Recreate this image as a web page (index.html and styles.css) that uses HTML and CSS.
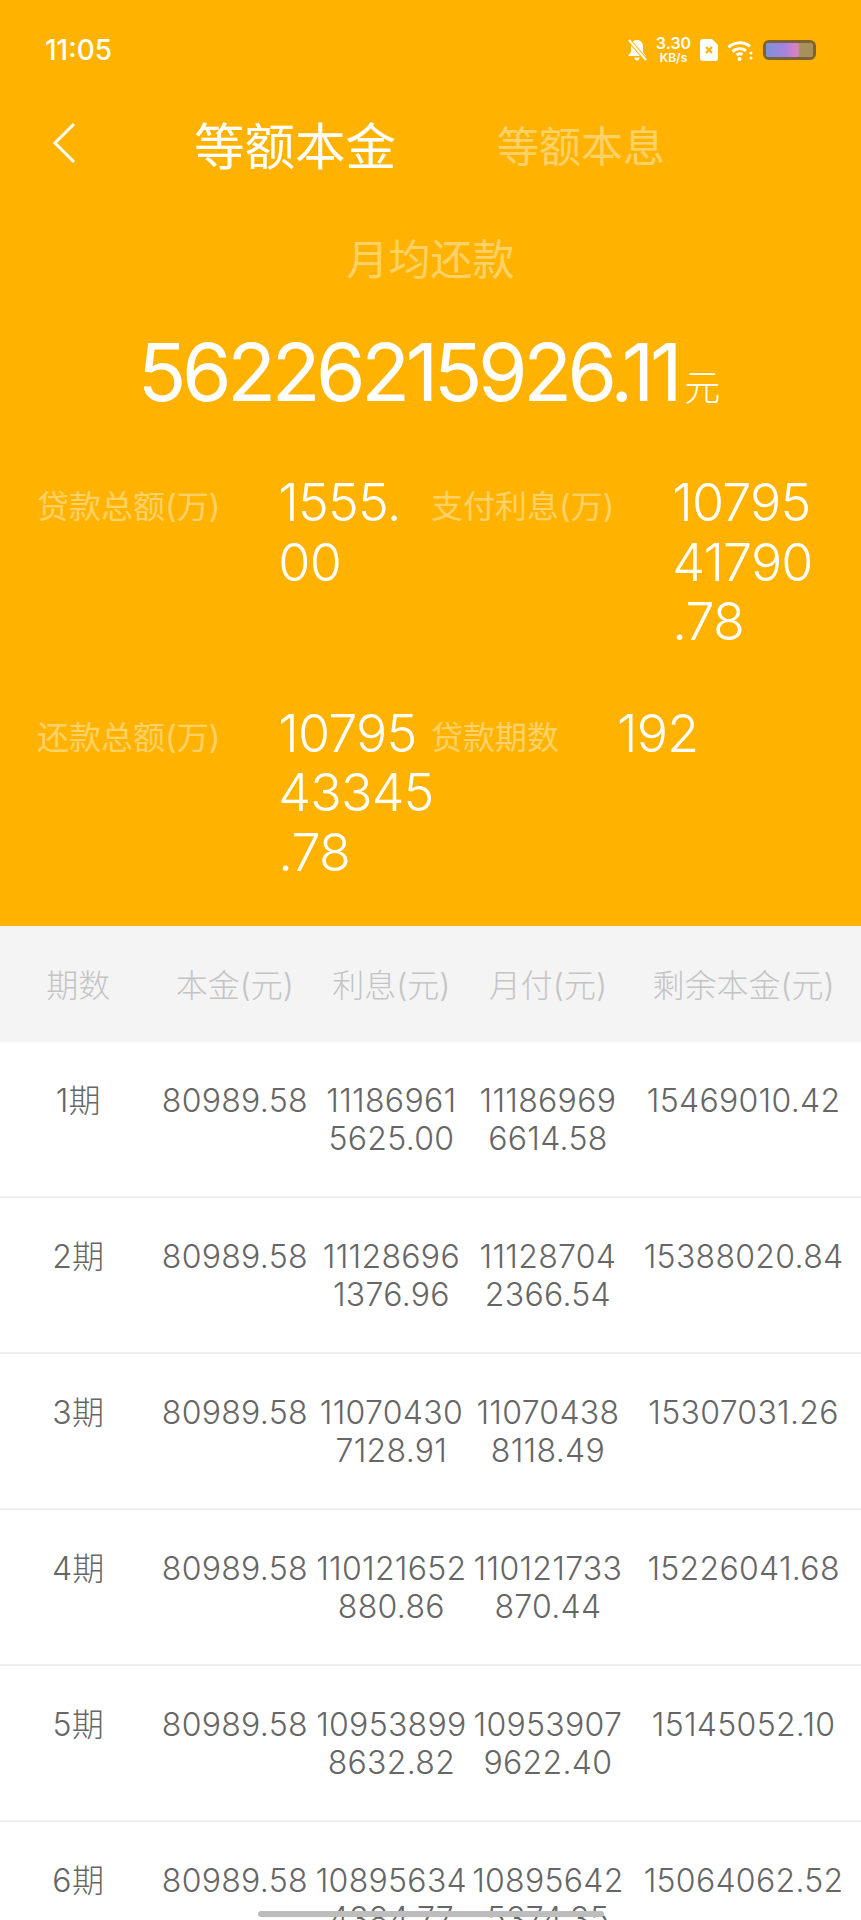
FILE: index.html
```html
<!DOCTYPE html>
<html lang="zh">
<head>
<meta charset="utf-8">
<title>等额本金</title>
<link rel="stylesheet" href="styles.css">
</head>
<body>
<div class="page">
  <section class="hero">
    <div class="status">
      <span class="time">11:05</span>
      <div class="status-icons">
        <svg class="ic-bell" viewBox="0 0 20 22"><path d="M10 1c4 0 6 3 6 7v5l3 4H1l3-4V8c0-4 2-7 6-7zM7.500 18.500h5c0 2-1 3-2.500 3s-2.500-1-2.500-3z" fill="#fff"/><path d="M1 0l18 21" stroke="#ffb300" stroke-width="4"/><path d="M2 1l17 20" stroke="#fff" stroke-width="2"/></svg>
        <div class="speed"><span class="speed-num">3.30</span><span class="speed-unit">KB/s</span></div>
        <svg class="ic-sim" viewBox="0 0 18 22"><path d="M3 0h9l6 6v13a3 3 0 0 1-3 3H3a3 3 0 0 1-3-3V3a3 3 0 0 1 3-3z" fill="#fff"/><path d="M6 8l6 6M12 8l-6 6" stroke="#ffb300" stroke-width="2.200"/></svg>
        <svg class="ic-wifi" viewBox="0 0 25 21" fill="none" stroke="#fff" stroke-width="3"><path d="M0.500 7.500C6 1.500 16 1.500 22 6.500"/><path d="M4.500 11.500c4-3.500 9.500-3.500 13.500-.8"/><path d="M8.500 15c2-1.500 4-1.500 6-.5"/><circle cx="11.500" cy="19" r="2" fill="#fff" stroke="none"/><circle cx="23" cy="13" r="1.500" fill="#fff" stroke="none"/><circle cx="23" cy="18" r="1.500" fill="#fff" stroke="none"/></svg>
        <div class="battery"><div class="battery-fill"></div></div>
      </div>
    </div>
    <nav class="nav">
      <svg class="back" viewBox="0 0 24 42" fill="none"><path d="M22 2L3 21l19 19" stroke="#fff" stroke-width="3"/></svg>
      <span class="tab tab-on">等额本金</span>
      <span class="tab tab-off">等额本息</span>
    </nav>
    <div class="month-label">月均还款</div>
    <div class="month-value"><span class="amount">56226215926.11</span><span class="yuan">元</span></div>
    <div class="stats">
      <div class="stat stat-left">
        <span class="stat-label">贷款总额(万)</span>
        <span class="stat-value">1555.<br>00</span>
      </div>
      <div class="stat">
        <span class="stat-label">支付利息(万)</span>
        <span class="stat-value">10795<br>41790<br>.78</span>
      </div>
      <div class="stat stat-left">
        <span class="stat-label">还款总额(万)</span>
        <span class="stat-value">10795<br>43345<br>.78</span>
      </div>
      <div class="stat">
        <span class="stat-label">贷款期数</span>
        <span class="stat-value">192</span>
      </div>
    </div>
  </section>

  <div class="row head">
    <span class="c2">期数</span><span class="c2">本金(元)</span><span class="c2">利息(元)</span><span class="c2">月付(元)</span><span class="c3">剩余本金(元)</span>
  </div>
  <div class="row item">
    <span class="c2">1期</span><span class="c2">80989.58</span><span class="c2">11186961<br>5625.00</span><span class="c2">11186969<br>6614.58</span><span class="c3">15469010.42</span>
  </div>
  <div class="row item">
    <span class="c2">2期</span><span class="c2">80989.58</span><span class="c2">11128696<br>1376.96</span><span class="c2">11128704<br>2366.54</span><span class="c3">15388020.84</span>
  </div>
  <div class="row item">
    <span class="c2">3期</span><span class="c2">80989.58</span><span class="c2">11070430<br>7128.91</span><span class="c2">11070438<br>8118.49</span><span class="c3">15307031.26</span>
  </div>
  <div class="row item">
    <span class="c2">4期</span><span class="c2">80989.58</span><span class="c2">110121652<br>880.86</span><span class="c2">110121733<br>870.44</span><span class="c3">15226041.68</span>
  </div>
  <div class="row item">
    <span class="c2">5期</span><span class="c2">80989.58</span><span class="c2">10953899<br>8632.82</span><span class="c2">10953907<br>9622.40</span><span class="c3">15145052.10</span>
  </div>
  <div class="row item">
    <span class="c2">6期</span><span class="c2">80989.58</span><span class="c2">10895634<br>4384.77</span><span class="c2">10895642<br>5374.35</span><span class="c3">15064062.52</span>
  </div>
  <div class="home-bar"></div>
</div>
</body>
</html>
```
FILE: styles.css
```css
* { box-sizing: border-box; }
html, body { margin: 0; padding: 0; }
body {
  background: #fff;
  font-family: Inter, "Noto Sans CJK SC", sans-serif;
  font-weight: 300;
}
.page { position: relative; width: 861px; height: 1920px; overflow: hidden; }

.hero { height: 926px; background: #ffb300; color: #fff; }

.status { height: 100px; display: flex; align-items: center; justify-content: space-between; padding: 0 45px 0 45px; }
.time { font-size: 28px; font-weight: 500; }
.status-icons { display: flex; align-items: center; }
.ic-bell { width: 20px; height: 22px; margin-right: 10px; }
.speed { display: flex; flex-direction: column; align-items: center; width: 33px; margin-right: 10px; font-weight: 600; }
.speed-num { font-size: 16px; line-height: 15px; }
.speed-unit { font-size: 12px; line-height: 13px; }
.ic-sim { width: 18px; height: 22px; margin-right: 10px; }
.ic-wifi { width: 25px; height: 21px; margin-right: 10px; }
.battery { width: 53px; height: 20px; border: 3px solid #7c6234; border-radius: 6px; overflow: hidden; }
.battery-fill { height: 100%; background: linear-gradient(90deg, #7c93d8 0%, #a583e0 40%, #d580c6 60%, #cf86ba 68%, #a8905c 72%, #a8905c 100%); }

.nav { height: 86px; display: flex; align-items: center; padding-left: 52px; }
.back { width: 24px; height: 42px; margin-right: 118px; }
.tab-on { font-size: 50.500px; font-weight: 400; width: 303px; }
.tab-off { font-size: 42px; opacity: 0.4; font-weight: 400; }

.month-label { margin-top: 44px; height: 60px; line-height: 60px; text-align: center; font-size: 42px; opacity: 0.4; font-weight: 400; }
.month-value { margin-top: 32px; height: 100px; display: flex; justify-content: center; align-items: baseline; line-height: 100px; padding-right: 3px; }
.amount { font-size: 80px; font-weight: 400; letter-spacing: -4.400px; }
.yuan { font-size: 36px; margin-left: 6px; }

.stats { margin-top: 51px; display: grid; grid-template-columns: 431px 430px; row-gap: 52px; }
.stat { display: flex; align-items: flex-start; }
.stat-left { padding-left: 37px; }
.stat-label { font-size: 32px; line-height: 60px; padding-top: 4px; opacity: 0.4; font-weight: 400; margin-right: 58px; white-space: nowrap; }
.stat-value { font-size: 52px; line-height: 59.500px; letter-spacing: -0.800px; white-space: nowrap; font-weight: 350; }

.row { display: flex; text-align: center; font-size: 32px; line-height: 38px; }
.c2 { flex: 2 1 0; min-width: 0; white-space: nowrap; }
.c3 { flex: 3 1 0; min-width: 0; white-space: nowrap; }
.head { height: 116px; padding-top: 3px; align-items: center; background: #f4f4f4; color: #c4c4c4; }
.item { height: 156px; padding-top: 40px; color: #666; border-bottom: 2px solid #eee; letter-spacing: 0.300px; }

.home-bar { position: absolute; left: 258px; top: 1911px; width: 346px; height: 6px; border-radius: 3px; background: #bdbdbd; }
```
